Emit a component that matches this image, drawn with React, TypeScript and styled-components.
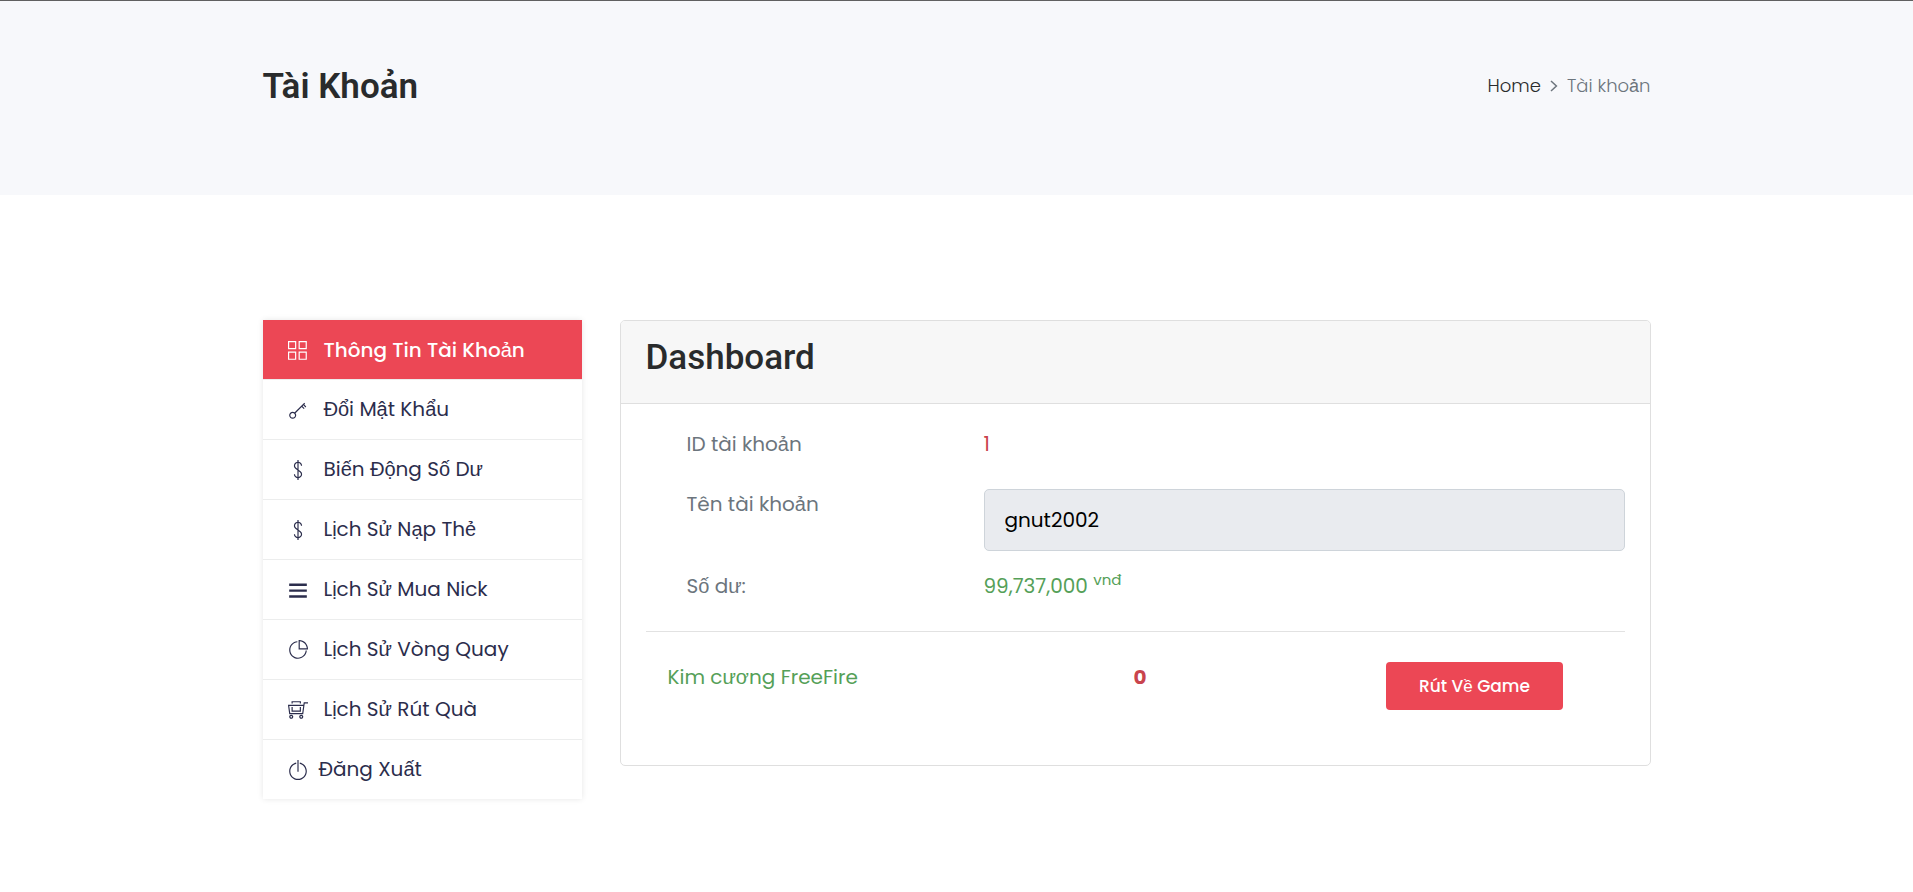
import React from 'react';
import styled, { createGlobalStyle, css } from 'styled-components';
import type { IconType } from 'react-icons';
import {
  TfiKey,
  TfiLayoutGrid2,
  TfiMenu,
  TfiMoney,
  TfiPieChart,
  TfiPowerOff,
  TfiShoppingCartFull,
} from 'react-icons/tfi';

const colors = {
  accent: '#ec4755',
  ink: '#292b2c',
  navy: '#2b2d4c',
  muted: '#6c757d',
  green: '#55a058',
  red: '#c9444d',
  line: '#dfdfdf',
  band: '#f7f8fb',
};

const GlobalStyle = createGlobalStyle`
  *, *::before, *::after { box-sizing: border-box; }
  body {
    margin: 0;
    background: #fff;
    color: ${colors.muted};
    font: 400 20px/30px Poppins, "Liberation Sans", sans-serif;
  }
  a { color: inherit; text-decoration: none; }
`;

const Container = styled.div`
  width: 100%;
  max-width: 1426px;
  margin: 0 auto;
  padding: 0 19px;
`;

const TitleBand = styled.header`
  padding: 60px 0 84px;
  border-top: 1px solid #606060;
  background: ${colors.band};
`;

const TitleRow = styled(Container)`
  display: flex;
  flex-wrap: wrap;
  align-items: center;
  justify-content: space-between;
`;

const PageTitle = styled.h1`
  margin: 0;
  color: ${colors.ink};
  font: 600 35px/52px Roboto, sans-serif;
  margin-bottom: -2px;
`;

const Breadcrumb = styled.nav`
  display: flex;
  align-items: center;
  gap: 9px;
  font-size: 18px;
  font-weight: 300;

  a { color: ${colors.ink}; }
`;

const Content = styled(Container)`
  display: grid;
  grid-template-columns: 319px minmax(0, 1fr);
  align-items: start;
  gap: 38px;
  padding-top: 125px;
  padding-bottom: 94px;

  @media (max-width: 960px) {
    grid-template-columns: minmax(0, 1fr);
  }
`;

const Menu = styled.ul`
  margin: 0;
  padding: 0;
  list-style: none;
  box-shadow: 0 0 6px rgba(0, 0, 0, 0.1);
`;

const MenuItem = styled.li`
  border-top: 1px solid #eceded;

  &:first-child { border-top: 0; }
`;

const MenuLink = styled.a<{ $active?: boolean; $tight?: boolean }>`
  display: flex;
  align-items: center;
  gap: ${({ $tight }) => ($tight ? 11 : 16)}px;
  padding: 14px 25px 15px;
  color: ${colors.navy};

  svg {
    flex: none;
    width: 20px;
    height: 20px;
    margin-top: 2px;
  }

  ${({ $active }) =>
    $active &&
    css`
      padding: 15px 25px 14px;
      background: ${colors.accent};
      color: #fff;
      font-weight: 500;
    `}
`;

const Card = styled.section`
  border: 1px solid ${colors.line};
  border-radius: 5px;
  background: #fff;
`;

const CardHeader = styled.div`
  padding: 17px 25px 25px;
  border-bottom: 1px solid ${colors.line};
  border-radius: 4px 4px 0 0;
  background: #f7f7f7;
`;

const CardTitle = styled.h2`
  margin: 0;
  color: ${colors.ink};
  font: 500 35px/40px Roboto, sans-serif;
`;

const CardBody = styled.div`
  padding: 25px 25px 55px;
`;

const Field = styled.div`
  display: grid;
  grid-template-columns: 297px minmax(0, 1fr);
  align-items: start;
  padding-left: 41px;
  margin-bottom: 20px;
`;

const FieldLabel = styled.label`
  padding-bottom: 10px;
`;

const Value = styled.span<{ $tone: 'green' | 'red'; $bold?: boolean }>`
  color: ${({ $tone }) => colors[$tone]};
  font-weight: ${({ $bold }) => ($bold ? 700 : 400)};
`;

const Unit = styled.sup`
  font-size: 15px;
  line-height: 0;
`;

const NameInput = styled.input`
  width: 100%;
  height: 62px;
  padding: 0 20px;
  border: 1px solid #ced4da;
  border-radius: 5px;
  background: #e9ebef;
  color: #000;
  font: inherit;
`;

const Divider = styled.hr`
  margin: 0 0 30px;
  border: 0;
  border-top: 1px solid #e2e2e2;
`;

const BalanceRow = styled.div`
  display: grid;
  grid-template-columns: 467fr 253fr 239fr;
  align-items: start;
  padding-left: 22px;
`;

const WithdrawButton = styled.button`
  justify-self: start;
  height: 48px;
  padding: 0 33px;
  border: 0;
  border-radius: 4px;
  background: ${colors.accent};
  color: #fff;
  font: inherit;
  font-size: 17px;
  font-weight: 500;
  cursor: pointer;
`;

type Entry = { label: string; icon: IconType; active?: boolean; tight?: boolean };

const entries: Entry[] = [
  { label: 'Thông Tin Tài Khoản', icon: TfiLayoutGrid2, active: true },
  { label: 'Đổi Mật Khẩu', icon: TfiKey },
  { label: 'Biến Động Số Dư', icon: TfiMoney },
  { label: 'Lịch Sử Nạp Thẻ', icon: TfiMoney },
  { label: 'Lịch Sử Mua Nick', icon: TfiMenu },
  { label: 'Lịch Sử Vòng Quay', icon: TfiPieChart },
  { label: 'Lịch Sử Rút Quà', icon: TfiShoppingCartFull },
  { label: 'Đăng Xuất', icon: TfiPowerOff, tight: true },
];

const Chevron = () => (
  <svg width="8" height="12" viewBox="0 0 8 12" fill="none" aria-hidden="true">
    <path d="M1 1 L6.4 6 L1 11" stroke="currentColor" strokeWidth="1.5" />
  </svg>
);

export default function App() {
  return (
    <>
      <GlobalStyle />
      <TitleBand>
        <TitleRow>
          <PageTitle>Tài Khoản</PageTitle>
          <Breadcrumb>
            <a href="#home">Home</a>
            <Chevron />
            <span>Tài khoản</span>
          </Breadcrumb>
        </TitleRow>
      </TitleBand>
      <Content as="main">
        <nav>
          <Menu>
            {entries.map(({ label, icon: Icon, active, tight }) => (
              <MenuItem key={label}>
                <MenuLink href="#account" $active={active} $tight={tight}>
                  <Icon />
                  {label}
                </MenuLink>
              </MenuItem>
            ))}
          </Menu>
        </nav>
        <Card>
          <CardHeader>
            <CardTitle>Dashboard</CardTitle>
          </CardHeader>
          <CardBody>
            <Field>
              <FieldLabel as="span">ID tài khoản</FieldLabel>
              <Value $tone="red">1</Value>
            </Field>
            <Field>
              <FieldLabel htmlFor="account-name">Tên tài khoản</FieldLabel>
              <NameInput id="account-name" defaultValue="gnut2002" readOnly />
            </Field>
            <Field>
              <FieldLabel as="span">Số dư:</FieldLabel>
              <Value $tone="green">
                99,737,000 <Unit>vnđ</Unit>
              </Value>
            </Field>
            <Divider />
            <BalanceRow>
              <Value $tone="green">Kim cương FreeFire</Value>
              <Value $tone="red" $bold>0</Value>
              <WithdrawButton type="button">Rút Về Game</WithdrawButton>
            </BalanceRow>
          </CardBody>
        </Card>
      </Content>
    </>
  );
}
